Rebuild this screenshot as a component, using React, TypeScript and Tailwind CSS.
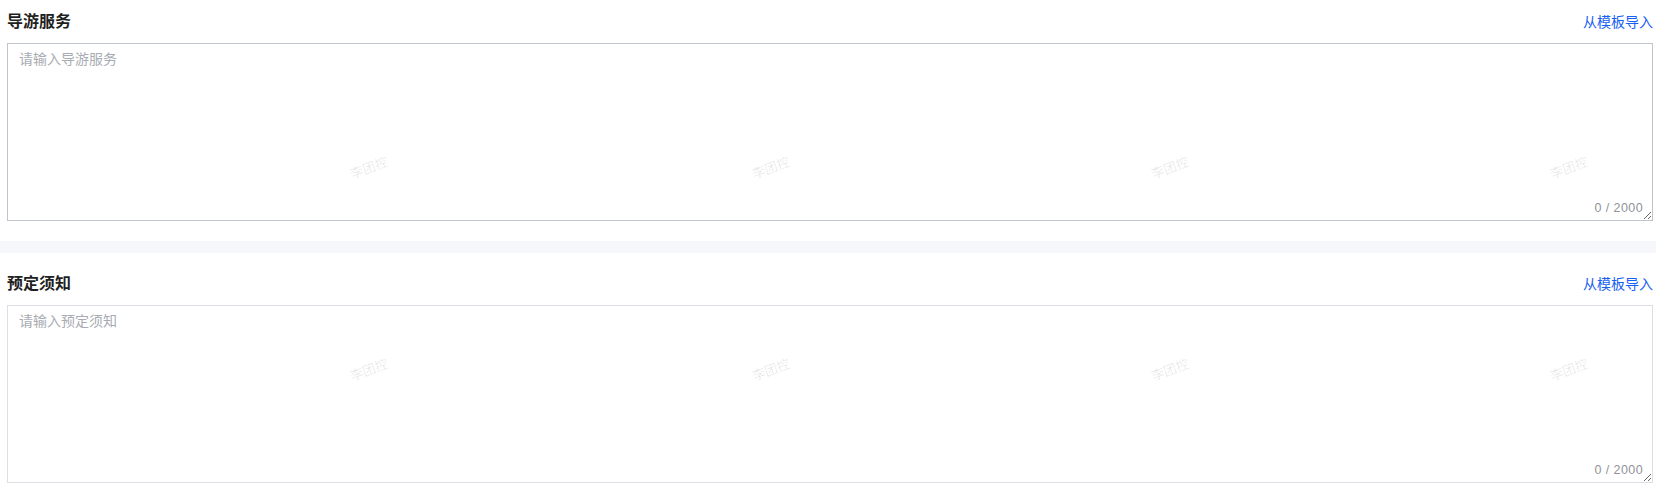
import clsx from 'clsx';

const FONT = "font-['Liberation_Sans','Noto_Sans_CJK_SC',sans-serif]";

// watermark centers, one row per section
const MARK_X = [369, 771, 1170, 1569];
const MARK_Y = [168, 370];

const Section = ({
  title,
  placeholder,
  first,
}: {
  title: string;
  placeholder: string;
  first?: boolean;
}) => (
  <div className={clsx('bg-white pl-[7px] pr-[3px] pb-[20px]', first ? 'pt-[11px]' : 'pt-[20px]')}>
    {/* Header */}
    <div className="flex items-center justify-between h-[22px] mb-[10px]">
      <h3 className="text-[16px] leading-[22px] font-bold text-[#1f1f1f]">{title}</h3>
      <button className="text-[14px] leading-[22px] text-[#1660f2] cursor-pointer">从模板导入</button>
    </div>

    {/* Textarea */}
    <div className="relative">
      <textarea
        placeholder={placeholder}
        maxLength={2000}
        className={clsx(
          'block w-full h-[178px] resize-y border bg-white px-[11px] py-[5px] text-[14px] leading-[21px] text-[#606266] outline-none placeholder:text-[#a8abb2]',
          first ? 'border-[#c0c4cc]' : 'border-[#dcdfe6]'
        )}
      />
      <span className="absolute right-[10px] bottom-[6px] text-[12.5px] leading-[14px] tracking-[0.4px] text-[#909399] bg-white">
        0 / 2000
      </span>
    </div>
  </div>
);

export default function App() {
  return (
    <div className={clsx('relative w-full min-h-[503px] bg-white overflow-hidden', FONT)}>
      <Section title="导游服务" placeholder="请输入导游服务" first />
      <div className="h-[12px] bg-[#f5f7fa]" />
      <Section title="预定须知" placeholder="请输入预定须知" />

      {/* Watermark layer */}
      <div className="pointer-events-none absolute inset-0 select-none">
        {MARK_Y.map((y) =>
          MARK_X.map((x) => (
            <span
              key={`${x}-${y}`}
              className="absolute text-[13px] leading-[13px] text-black/10 -rotate-20 -translate-x-1/2 -translate-y-1/2 whitespace-nowrap"
              style={{ left: x, top: y }}
            >
              李团控
            </span>
          ))
        )}
      </div>
    </div>
  );
}
